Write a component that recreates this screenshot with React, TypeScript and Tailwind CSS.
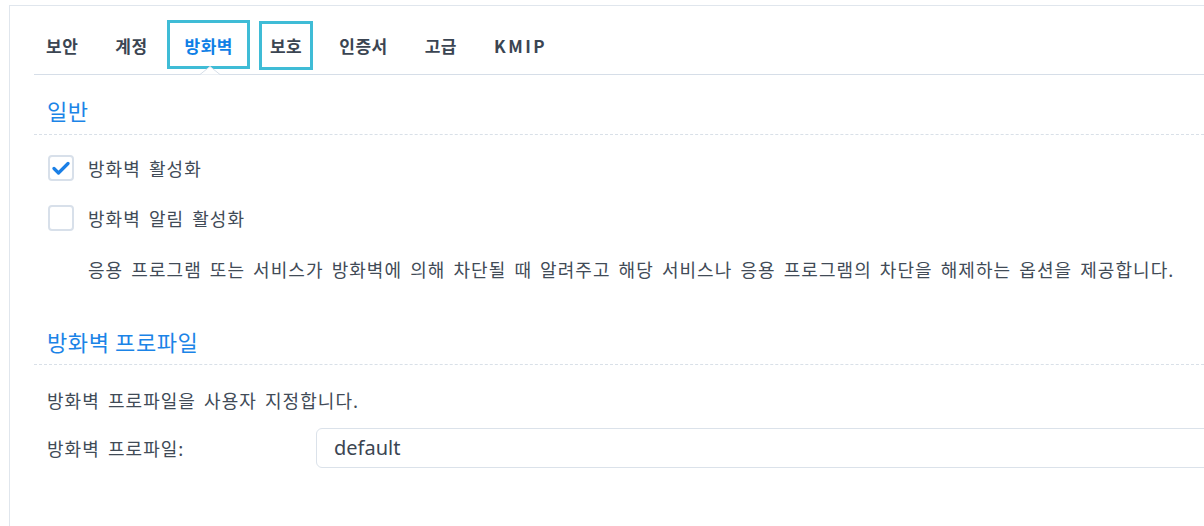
import * as React from "react";

const KR = { fontFamily: '"Noto Sans CJK KR", "Noto Sans", sans-serif' };

const tabs = ["보안", "계정", "방화벽", "보호", "인증서", "고급", "KMIP"];

function Checkbox({ checked }: { checked: boolean }) {
  return (
    <div className="w-[26px] h-[26px] rounded-[4px] border-2 border-[#d8e0ea] bg-white flex items-center justify-center shrink-0">
      {checked && (
        <svg width="18" height="14" viewBox="0 0 18 14" fill="none">
          <path d="M2 7.5 L6.5 12 L16 2.5" stroke="#1a7fe6" strokeWidth="3.2" strokeLinecap="round" strokeLinejoin="round" />
        </svg>
      )}
    </div>
  );
}

function SectionTitle({ title, className }: { title: string; className: string }) {
  return (
    <div className={`border-b border-dashed border-[#d9e0e8] -ml-[13px] pl-[13px] ${className}`}>
      <h2 className="text-[22px] leading-[26px] text-[#1b84e7] tracking-[0.6px]">{title}</h2>
    </div>
  );
}

const body = "text-[18px] text-[#414b57] tracking-[1.05px] [word-spacing:3px]";

export default function App() {
  return (
    <div className="w-[1204px] h-[526px] bg-white overflow-hidden pt-[5px] pl-[9px]" style={KR}>
      <div className="h-[521px] border-t border-l border-[#e0e6ed]">
        {/* tab bar */}
        <div className="ml-[24px] h-[69px] border-b border-[#d6dee8] relative flex items-start pt-[27px] pl-[12px] gap-[37px]">
          {tabs.map((t) => {
            const active = t === "방화벽";
            return (
              <div key={t} className="relative">
                <span
                  className={`text-[17px] leading-[26px] font-bold ${t === "KMIP" ? "tracking-[2.5px]" : "tracking-[0.5px]"} ${
                    active ? "text-[#0f7fe6]" : "text-[#3b4552]"
                  }`}
                >
                  {t}
                </span>
                {active && (
                  <div className="absolute left-[-18px] right-[-17px] top-[-13px] h-[49px] border-[3px] border-[#3fbcd6]" />
                )}
                {t === "보호" && (
                  <div className="absolute left-[-11px] right-[-11px] top-[-12px] h-[49px] border-[3px] border-[#3fbcd6]" />
                )}
              </div>
            );
          })}
          <svg
            className="absolute left-[166px] bottom-[-1px]"
            width="20"
            height="10"
            viewBox="0 0 20 10"
          >
            <path d="M0 9.5 L10 1.5 L20 9.5" fill="#ffffff" stroke="#d6dee8" strokeWidth="1" />
          </svg>
        </div>

        <div className="ml-[24px] pl-[13px]">
          <SectionTitle title="일반" className="pt-[22px] pb-[11px]" />

          <div className="mt-[20px] flex items-center gap-[14px] pl-[1px]">
            <Checkbox checked />
            <span className={`${body} leading-[26px]`}>방화벽 활성화</span>
          </div>
          <div className="mt-[24px] flex items-center gap-[14px] pl-[1px]">
            <Checkbox checked={false} />
            <span className={`${body} leading-[26px]`}>방화벽 알림 활성화</span>
          </div>
          <p className={`${body} mt-[26px] pl-[41px] leading-[24px] whitespace-nowrap`}>
            응용 프로그램 또는 서비스가 방화벽에 의해 차단될 때 알려주고 해당 서비스나 응용 프로그램의 차단을 해제하는 옵션을 제공합니다.
          </p>

          <SectionTitle title="방화벽 프로파일" className="pt-[47px] pb-[10px]" />

          <p className={`${body} mt-[23px] leading-[24px]`}>방화벽 프로파일을 사용자 지정합니다.</p>

          <div className="mt-[16px] flex items-center">
            <span className={`${body} w-[269px] shrink-0 leading-[24px]`}>방화벽 프로파일:</span>
            <div className="h-[40px] w-[960px] shrink-0 rounded-[6px] border border-[#dbe2ea] flex items-center pl-[17px]">
              <span className="text-[20px] text-[#3b4552]" style={{ fontFamily: '"Noto Sans", sans-serif' }}>
                default
              </span>
            </div>
          </div>
        </div>
      </div>
    </div>
  );
}
